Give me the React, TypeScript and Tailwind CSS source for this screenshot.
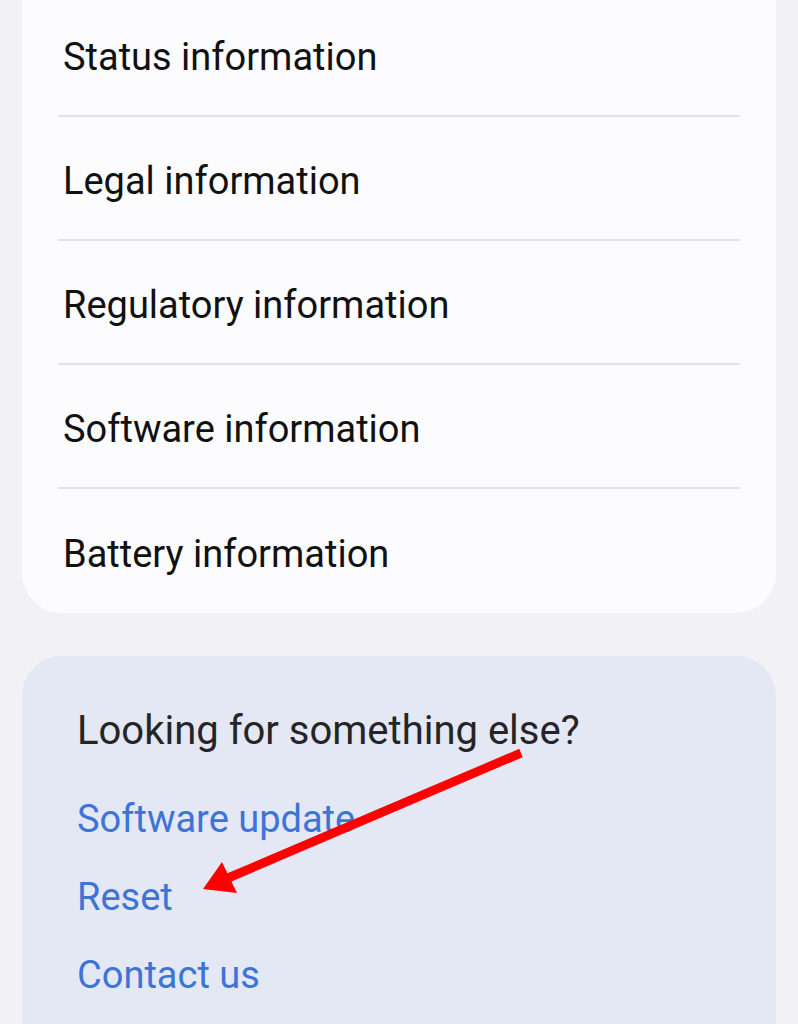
const rows = [
  'Status information',
  'Legal information',
  'Regulatory information',
  'Software information',
  'Battery information'
]

const links = ['Software update', 'Reset', 'Contact us']

export default function App() {
  return (
    <div className="relative h-[1024px] overflow-hidden bg-[#f2f2f4] px-[22px] font-['Roboto',sans-serif]">
      <div className="-mt-[7px] rounded-b-[40px] bg-[#fcfcfe] px-[36px]">
        {rows.map((r, i) => (
          <div
            key={r}
            className={`flex h-[124px] items-center px-[5px] ${i < rows.length - 1 ? 'border-b-2 border-[#e4e4e6]' : ''}`}
          >
            <span className="pt-[5px] text-[38px] leading-none text-[#111]">{r}</span>
          </div>
        ))}
      </div>

      <div className="mt-[43px] h-[420px] rounded-[40px] bg-[#e4e8f4] px-[55px] pt-[55px]">
        <h3 className="text-[40px] leading-none text-[#242527]">Looking for something else?</h3>
        <div className="mt-[50px] flex flex-col gap-[42px]">
          {links.map(l => (
            <a key={l} className="text-[38px] leading-[36px] text-[#3c74d8]">{l}</a>
          ))}
        </div>
      </div>

      {/* annotation arrow */}
      <svg className="pointer-events-none absolute left-0 top-0" width="798" height="1024" viewBox="0 0 798 1024">
        <line x1="521" y1="753" x2="228" y2="878" stroke="#f00" strokeWidth="9" />
        <polygon points="203,889 222,862 237,893" fill="#f00" />
      </svg>
    </div>
  )
}
